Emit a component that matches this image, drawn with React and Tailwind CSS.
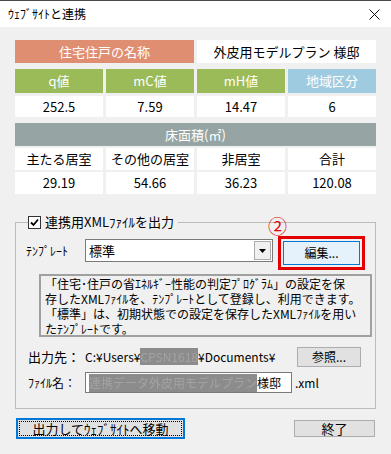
import React from 'react';

const jp = { fontFamily: '"Noto Sans CJK JP", "Noto Sans", sans-serif' };

function Cell({ children, className = '' }) {
  return <div className={`flex items-center justify-center ${className}`}>{children}</div>;
}

function Blur({ children }) {
  return <span className="bg-[#8c8c8c] text-[#a3a3a3] blur-[0.6px]">{children}</span>;
}

export default function App() {
  return <div className="w-[391px] h-[454px] bg-[#f0f0f0] border-t border-[#4a4a4a] text-black overflow-hidden" style={jp}>
      <div className="h-[26px] bg-white flex items-center justify-between pl-[8px] pr-[11px]">
        <span className="text-[12px]">ｳｪﾌﾞｻｲﾄと連携</span>
        <svg width="11" height="11" viewBox="0 0 11 11">
          <path d="M0.5 0.5 L10.5 10.5 M10.5 0.5 L0.5 10.5" stroke="#111" strokeWidth="1" />
        </svg>
      </div>

      <div className="px-[15px] pt-[13px]">
        <div className="w-[361px] text-[13px]">
          <div className="grid grid-cols-2 gap-[3px] h-[23px]">
            <Cell className="bg-[#df8e72] text-white">住宅住戸の名称</Cell>
            <Cell className="bg-white">外皮用モデルプラン 様邸</Cell>
          </div>
          <div className="grid grid-cols-4 gap-[3px] h-[24px] mt-[6px]">
            <Cell className="bg-[#9bbb59] text-white">q値</Cell>
            <Cell className="bg-[#9bbb59] text-white">mC値</Cell>
            <Cell className="bg-[#9bbb59] text-white">mH値</Cell>
            <Cell className="bg-[#9fcbe0] text-white">地域区分</Cell>
          </div>
          <div className="grid grid-cols-4 gap-[3px] h-[21px] mt-[3px]">
            <Cell className="bg-white">252.5</Cell>
            <Cell className="bg-white">7.59</Cell>
            <Cell className="bg-white">14.47</Cell>
            <Cell className="bg-white">6</Cell>
          </div>
          <Cell className="bg-[#96a5a3] text-white h-[23px] mt-[6px]">床面積(㎡)</Cell>
          <div className="grid grid-cols-4 gap-[3px] h-[22px] mt-[2px]">
            <Cell className="bg-white">主たる居室</Cell>
            <Cell className="bg-white">その他の居室</Cell>
            <Cell className="bg-white">非居室</Cell>
            <Cell className="bg-white">合計</Cell>
          </div>
          <div className="grid grid-cols-4 gap-[3px] h-[22px] mt-[2px]">
            <Cell className="bg-white">29.19</Cell>
            <Cell className="bg-white">54.66</Cell>
            <Cell className="bg-white">36.23</Cell>
            <Cell className="bg-white">120.08</Cell>
          </div>
        </div>

        <fieldset className="w-[361px] mt-[20px] border border-[#bcbcbc] pl-[10px] pb-[15px] text-[12px]">
          <legend className="ml-[2px] pr-[4px] flex items-center h-[16px] text-[13px]">
            <span className="w-[13px] h-[13px] bg-white border border-[#333] flex items-center justify-center mr-[4px]">
              <svg width="9" height="9" viewBox="0 0 9 9">
                <path d="M1 4.5 L3.5 7 L8 1.5" stroke="#000" strokeWidth="1.8" fill="none" />
              </svg>
            </span>
            連携用XMLﾌｧｲﾙを出力
          </legend>

          <div className="flex items-start mt-[6px]">
            <div className="w-[59px] h-[23px] mt-[3px] flex items-center">ﾃﾝﾌﾟﾚｰﾄ</div>
            <div className="w-[188px] h-[23px] mt-[3px] bg-white border border-[#7a7a7a] flex items-center justify-between">
              <span className="pl-[3px] text-[13px]">標準</span>
              <span className="w-[17px] h-[19px] mr-[1px] bg-[#f0f0f0] border border-[#acacac] flex items-center justify-center">
                <svg width="7" height="4" viewBox="0 0 7 4"><path d="M0 0 H7 L3.5 4 Z" fill="#000" /></svg>
              </span>
            </div>
            <div className="relative ml-[5px] border-[3px] border-[#e30000] p-[2px]">
              <span className="absolute left-[-13px] top-[-23px] text-[#e30000] text-[19px] leading-none">②</span>
              <button className="w-[77px] h-[24px] bg-[#e5f1fb] border border-[#0078d7] text-[12px] flex items-center justify-center">編集...</button>
            </div>
          </div>

          <div className="ml-[13px] mt-[4px] w-[333px] h-[63px] border-2 border-[#a0a0a0] pl-[4px] text-[12px] leading-[15px] whitespace-nowrap">
            「住宅･住戸の省ｴﾈﾙｷﾞｰ性能の判定ﾌﾟﾛｸﾞﾗﾑ」の設定を保<br />
            存したXMLﾌｧｲﾙを、ﾃﾝﾌﾟﾚｰﾄとして登録し、利用できます。<br />
            「標準」は、初期状態での設定を保存したXMLﾌｧｲﾙを用い<br />
            たﾃﾝﾌﾟﾚｰﾄです。
          </div>

          <div className="flex items-center mt-[10px] pl-[2px]">
            <span className="w-[57px] text-[13px]">出力先：</span>
            <span className="w-[212px] text-[12px] whitespace-nowrap">C:¥Users¥<Blur>CPSN1618</Blur>¥Documents¥</span>
            <button className="w-[64px] h-[20px] bg-[#e1e1e1] border border-[#adadad] flex items-center justify-center text-[12px]">参照...</button>
          </div>

          <div className="flex items-center mt-[5px] pl-[2px]">
            <span className="w-[57px] text-[12px]">ﾌｧｲﾙ名：</span>
            <div className="w-[207px] h-[21px] bg-white border border-[#7a7a7a] flex items-center pl-[3px] text-[12px] whitespace-nowrap overflow-hidden">
              <Blur>連携データ外皮用モデルプラン</Blur>様邸
            </div>
            <span className="ml-[3px] text-[12px]">.xml</span>
          </div>
        </fieldset>

        <div className="flex items-start justify-between mt-[9px] pl-[1px] pr-[1px] text-[13px]">
          <button className="w-[169px] h-[21px] bg-[#e1e1e1] border-2 border-[#0078d7] p-[1px]">
            <span className="w-full h-full flex items-center justify-center border border-dotted border-black">出力してｳｪﾌﾞｻｲﾄへ移動</span>
          </button>
          <button className="w-[81px] h-[17px] mt-[2px] bg-[#e1e1e1] border border-[#adadad] flex items-center justify-center">終了</button>
        </div>
      </div>
    </div>;
}
